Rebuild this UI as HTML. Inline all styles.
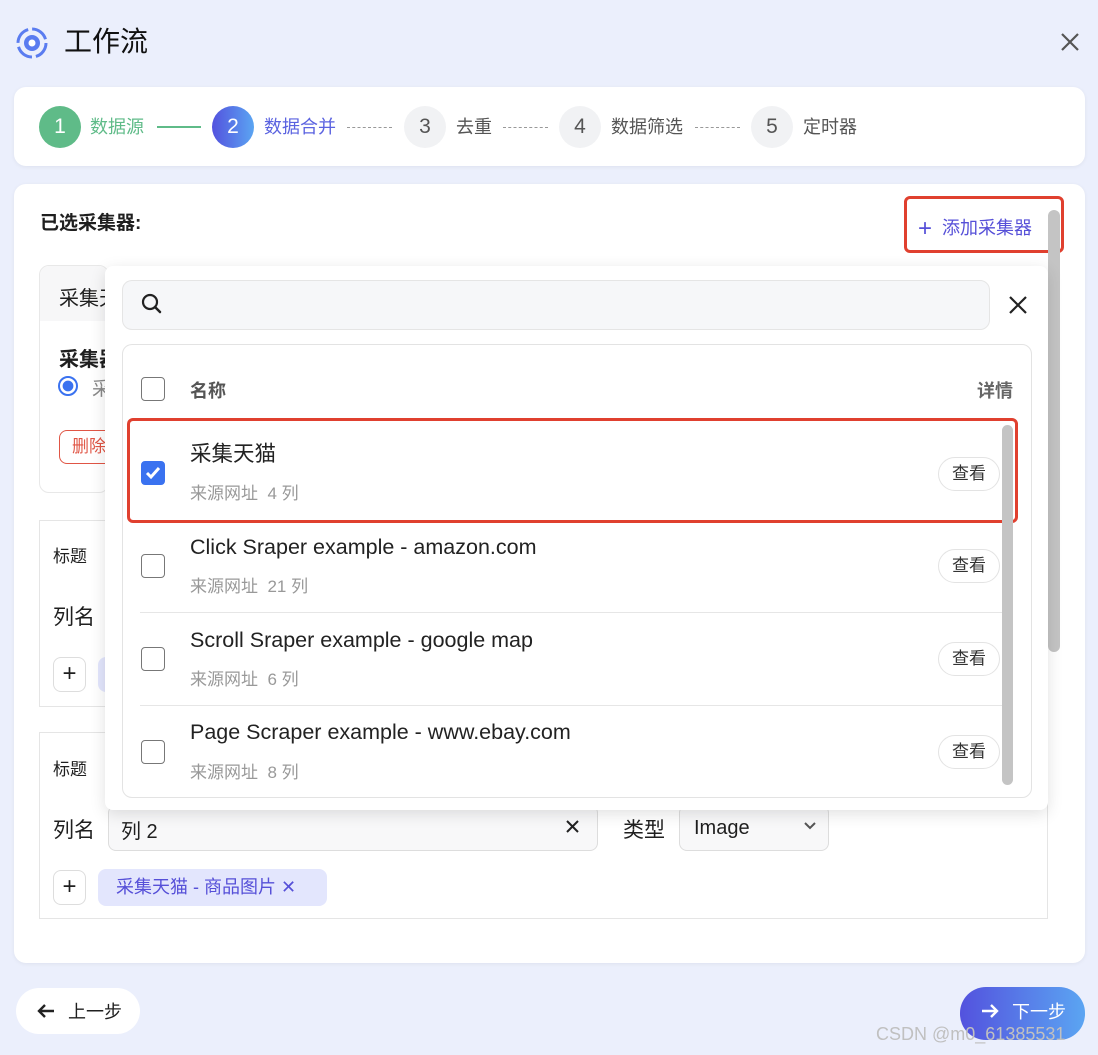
<!DOCTYPE html>
<html><head><meta charset="utf-8"><style>
*{margin:0;padding:0;box-sizing:border-box}
body{width:1098px;height:1055px;background:#ebeffc;font-family:"Liberation Sans","Noto Sans CJK SC",sans-serif;position:relative;overflow:hidden;color:#1f1f1f}
.a{position:absolute}
.card{background:#fff;border-radius:12px;box-shadow:0 1px 4px rgba(0,0,0,.06)}
.circ{position:absolute;width:42px;height:42px;border-radius:50%;top:106px;text-align:center;line-height:42px;font-size:21px;color:#fff}
.lbl{position:absolute;top:115px;font-size:18px;line-height:24px}
.dash{position:absolute;top:127px;border-top:1.5px dashed #999;height:0}
.cb{position:absolute;width:24px;height:24px;border:1.5px solid #777;border-radius:4px;background:#fff}
.tt{position:absolute;left:190px;font-size:21.5px;line-height:24px;color:#222}
.sub{position:absolute;left:190px;font-size:17px;color:#999;line-height:20px}
.view{position:absolute;left:938px;width:62px;height:34px;border:1px solid #e3e3e3;border-radius:17px;font-size:17px;text-align:center;line-height:32px;background:#fff;color:#333}
.sep{position:absolute;left:140px;width:862px;border-top:1px solid #e6e6e6}
</style></head><body>
<svg class="a" style="left:15px;top:26px" width="34" height="34" viewBox="0 0 34 34"><circle cx="17" cy="17" r="14" fill="none" stroke="#5a7cf0" stroke-width="3" stroke-dasharray="18 4"/><circle cx="17" cy="17" r="8" fill="#5a7cf0"/><circle cx="17" cy="17" r="3.5" fill="#fff"/></svg>
<div class="a" style="left:64px;top:25px;font-size:28px;line-height:34px;color:#111">工作流</div>
<svg class="a" style="left:1060px;top:32px" width="20" height="20" viewBox="0 0 20 20"><path d="M2 2L18 18M18 2L2 18" stroke="#555" stroke-width="2.2"/></svg>

<div class="a card" style="left:14px;top:87px;width:1071px;height:79px"></div>
<div class="circ" style="left:39px;background:#5fbb88">1</div>
<div class="lbl" style="left:90px;color:#5fbb88">数据源</div>
<div class="a" style="left:157px;top:126px;width:44px;height:2px;background:#5fbb88"></div>
<div class="circ" style="left:212px;background:linear-gradient(90deg,#5352de,#5ba5f2)">2</div>
<div class="lbl" style="left:264px;color:#5b63e0">数据合并</div>
<div class="dash" style="left:347px;width:45px"></div>
<div class="circ" style="left:404px;background:#f1f2f4;color:#555">3</div>
<div class="lbl" style="left:456px;color:#555">去重</div>
<div class="dash" style="left:503px;width:45px"></div>
<div class="circ" style="left:559px;background:#f1f2f4;color:#555">4</div>
<div class="lbl" style="left:611px;color:#555">数据筛选</div>
<div class="dash" style="left:695px;width:45px"></div>
<div class="circ" style="left:751px;background:#f1f2f4;color:#555">5</div>
<div class="lbl" style="left:803px;color:#555">定时器</div>

<div class="a card" style="left:14px;top:184px;width:1071px;height:779px"></div>
<div class="a" style="left:40px;top:212px;font-size:19px;font-weight:bold;line-height:24px">已选采集器:</div>
<div class="a" style="left:904px;top:196px;width:160px;height:57px;border:3px solid #e0402f;border-radius:6px"></div>
<div class="a" style="left:918px;top:216px;font-size:18px;color:#5650d8;line-height:24px"><span style="font-size:24px;vertical-align:-2px">+</span>&nbsp; 添加采集器</div>
<div class="a" style="left:1048px;top:210px;width:12px;height:442px;background:#c4c4c4;border-radius:6px"></div>

<div class="a" style="left:39px;top:265px;width:70px;height:228px;border:1px solid #e8e8e8;border-radius:10px;background:#fff;overflow:hidden">
<div style="height:55px;background:#f7f7f8"></div></div>
<div class="a" style="left:59px;top:282px;font-size:20px">采集天</div>
<div class="a" style="left:59px;top:343px;font-size:20px;font-weight:bold">采集器</div>
<div class="a" style="left:58px;top:376px;width:20px;height:20px;border-radius:50%;border:2px solid #3a72f0;background:radial-gradient(#3a72f0 45%,#fff 50%)"></div>
<div class="a" style="left:92px;top:374px;font-size:19px;color:#888">采</div>
<div class="a" style="left:59px;top:430px;width:60px;height:34px;border:1px solid #e05545;border-radius:8px;color:#e05545;font-size:17px;line-height:32px;padding-left:12px">删除</div>

<div class="a" style="left:39px;top:520px;width:1009px;height:187px;border:1px solid #e5e5e5"></div>
<div class="a" style="left:53px;top:542px;font-size:17px">标题</div>
<div class="a" style="left:53px;top:601px;font-size:21px">列名</div>
<div class="a" style="left:53px;top:657px;width:33px;height:35px;border:1px solid #ddd;border-radius:8px;text-align:center;font-size:24px;line-height:32px">+</div>
<div class="a" style="left:98px;top:657px;width:20px;height:35px;background:#e3e6fd;border-radius:8px"></div>

<div class="a" style="left:39px;top:732px;width:1009px;height:187px;border:1px solid #e5e5e5"></div>
<div class="a" style="left:53px;top:755px;font-size:17px">标题</div>
<div class="a" style="left:53px;top:814px;font-size:21px">列名</div>
<div class="a" style="left:108px;top:805px;width:490px;height:46px;border:1px solid #ddd;border-radius:8px;background:#f8f8f9"></div>
<div class="a" style="left:121px;top:815px;font-size:20px">列 2</div>
<svg class="a" style="left:566px;top:820px" width="13" height="13" viewBox="0 0 13 13"><path d="M1 1L12 12M12 1L1 12" stroke="#222" stroke-width="2"/></svg>
<div class="a" style="left:623px;top:814px;font-size:21px">类型</div>
<div class="a" style="left:679px;top:805px;width:150px;height:46px;border:1px solid #ddd;border-radius:8px;background:#f8f8f9"></div>
<div class="a" style="left:694px;top:817px;font-size:20px">Image</div>
<svg class="a" style="left:803px;top:821px" width="14" height="10" viewBox="0 0 14 10"><path d="M2 2l5 5 5-5" fill="none" stroke="#555" stroke-width="2"/></svg>
<div class="a" style="left:53px;top:870px;width:33px;height:35px;border:1px solid #ddd;border-radius:8px;text-align:center;font-size:24px;line-height:32px">+</div>
<div class="a" style="left:98px;top:869px;width:229px;height:37px;background:#e3e6fd;border-radius:8px;color:#5650d8;font-size:18px;line-height:37px;padding-left:18px">采集天猫 - 商品图片 ✕</div>

<div class="a" style="left:105px;top:266px;width:943px;height:544px;background:#fff;border-radius:8px;box-shadow:0 4px 16px rgba(0,0,0,.12)"></div>
<div class="a" style="left:122px;top:280px;width:868px;height:50px;background:#f6f7f9;border:1px solid #e5e5e5;border-radius:10px"></div>
<svg class="a" style="left:140px;top:292px" width="24" height="24" viewBox="0 0 24 24"><circle cx="10" cy="10" r="7" fill="none" stroke="#222" stroke-width="2.2"/><path d="M15 15l5 5" stroke="#222" stroke-width="2.5" stroke-linecap="round"/></svg>
<svg class="a" style="left:1008px;top:295px" width="20" height="20" viewBox="0 0 20 20"><path d="M2 2L18 18M18 2L2 18" stroke="#222" stroke-width="2.2"/></svg>
<div class="a" style="left:122px;top:344px;width:910px;height:454px;border:1px solid #e3e3e3;border-radius:10px"></div>
<div class="cb" style="left:141px;top:377px"></div>
<div class="a" style="left:190px;top:377px;font-size:18px;font-weight:bold;color:#555">名称</div>
<div class="a" style="left:977px;top:377px;font-size:18px;font-weight:bold;color:#666">详情</div>

<div class="a" style="left:127px;top:418px;width:891px;height:105px;border:3px solid #e0402f;border-radius:6px"></div>
<div class="cb" style="left:141px;top:461px;background:#3a72f0;border-color:#3a72f0"><svg width="22" height="22" viewBox="0 0 22 22"><path d="M5 11l4 4 8-9" fill="none" stroke="#fff" stroke-width="3"/></svg></div>
<div class="tt" style="top:442px">采集天猫</div>
<div class="sub" style="top:484px">来源网址 &nbsp;4 列</div>
<div class="view" style="top:457px">查看</div>

<div class="cb" style="left:141px;top:554px"></div>
<div class="tt" style="top:535px">Click Sraper example - amazon.com</div>
<div class="sub" style="top:577px">来源网址 &nbsp;21 列</div>
<div class="view" style="top:549px">查看</div>
<div class="sep" style="top:612px"></div>

<div class="cb" style="left:141px;top:647px"></div>
<div class="tt" style="top:628px">Scroll Sraper example - google map</div>
<div class="sub" style="top:670px">来源网址 &nbsp;6 列</div>
<div class="view" style="top:642px">查看</div>
<div class="sep" style="top:705px"></div>

<div class="cb" style="left:141px;top:740px"></div>
<div class="tt" style="top:720px">Page Scraper example - www.ebay.com</div>
<div class="sub" style="top:763px">来源网址 &nbsp;8 列</div>
<div class="view" style="top:735px">查看</div>
<div class="a" style="left:1002px;top:425px;width:11px;height:360px;background:#c4c4c4;border-radius:6px"></div>

<div class="a" style="left:16px;top:988px;width:124px;height:46px;background:#fff;border-radius:23px"></div>
<svg class="a" style="left:36px;top:1003px" width="20" height="16" viewBox="0 0 20 16"><path d="M18 8H3M9 2L3 8l6 6" fill="none" stroke="#222" stroke-width="2.4"/></svg>
<div class="a" style="left:68px;top:1000px;font-size:18px;line-height:24px">上一步</div>
<div class="a" style="left:960px;top:987px;width:125px;height:53px;background:linear-gradient(90deg,#5352de,#5ba5f2);border-radius:26px"></div>
<svg class="a" style="left:980px;top:1003px" width="20" height="16" viewBox="0 0 20 16"><path d="M2 8h15M11 2l6 6-6 6" fill="none" stroke="#fff" stroke-width="2.4"/></svg>
<div class="a" style="left:1012px;top:1000px;font-size:18px;line-height:24px;color:#fff">下一步</div>
<div class="a" style="left:876px;top:1024px;font-size:18px;color:#c0c0c0">CSDN @m0_61385531</div>
</body></html>
